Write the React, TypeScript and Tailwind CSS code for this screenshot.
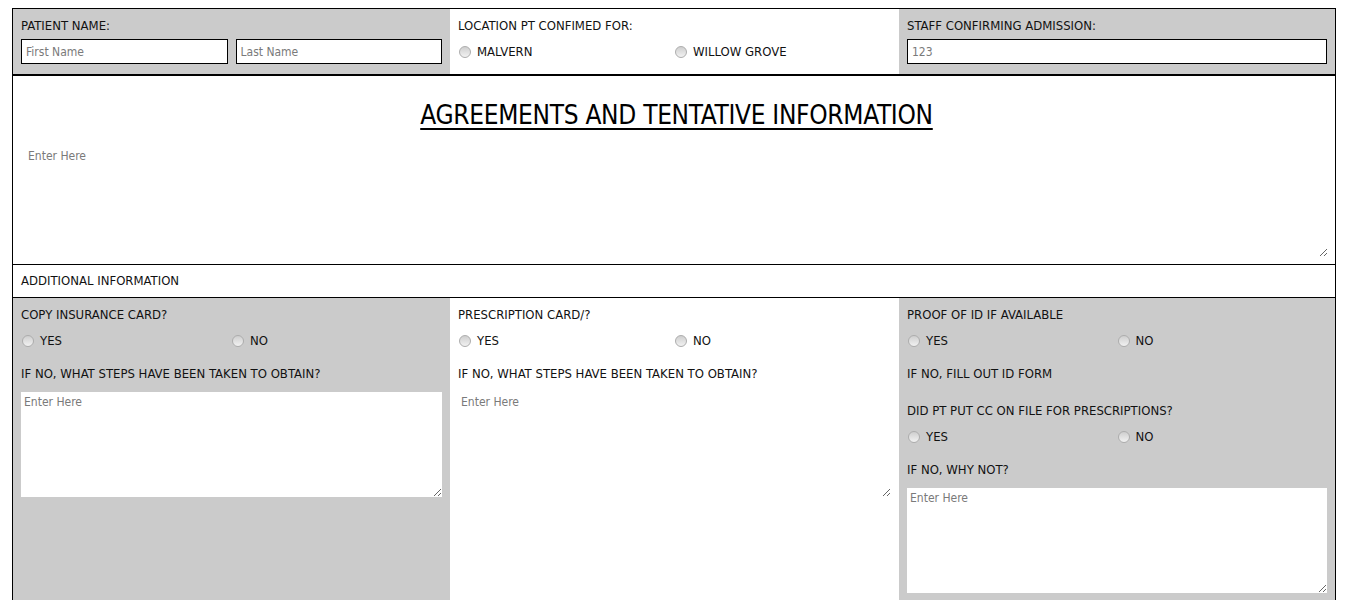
import React from 'react'

const font = { fontFamily: '"DejaVu Sans Condensed", "Liberation Sans", sans-serif' }

function Label({ children, className = '' }: { children: React.ReactNode; className?: string }) {
  return <div className={`text-[13px] leading-[18px] text-[#111] ${className}`}>{children}</div>
}

function Radio({ label, name }: { label: string; name: string }) {
  return (
    <label className="flex items-center gap-[6px] text-[13px] leading-[18px] text-[#111]">
      <input
        type="radio"
        name={name}
        className="appearance-none w-[12px] h-[12px] rounded-full border border-[#adadad] bg-linear-to-b from-[#cfcfcf] to-[#f2f2f2] m-0 shrink-0"
      />
      {label}
    </label>
  )
}

function YesNo({ name, className = '' }: { name: string; className?: string }) {
  return (
    <div className={`grid grid-cols-2 pl-px ${className}`}>
      <Radio label="YES" name={name} />
      <Radio label="NO" name={name} />
    </div>
  )
}

function Area({ className = '' }: { className?: string }) {
  return (
    <textarea
      placeholder="Enter Here"
      className={`block w-full bg-white border-0 outline-none px-[3px] py-[3px] text-[12px] leading-[15px] text-[#333] placeholder:text-[#7a7a7a] ${className}`}
    />
  )
}

export default function App() {
  return (
    <div className="min-h-screen bg-white pt-2 px-3" style={font}>
      <div className="border border-black">
        {/* top row */}
        <div className="grid grid-cols-[437px_449px_436px] border-b-2 border-black">
          <div className="bg-[#cbcbcb] px-2 pt-2 pb-[10px]">
            <Label>PATIENT NAME:</Label>
            <div className="flex gap-2 mt-[4px]">
              <input
                placeholder="First Name"
                className="w-full h-[25px] bg-white border border-black px-[4px] text-[12px] placeholder:text-[#7a7a7a] outline-none"
              />
              <input
                placeholder="Last Name"
                className="w-full h-[25px] bg-white border border-black px-[4px] text-[12px] placeholder:text-[#7a7a7a] outline-none"
              />
            </div>
          </div>
          <div className="bg-white px-2 pt-2">
            <Label>LOCATION PT CONFIMED FOR:</Label>
            <div className="grid grid-cols-2 pl-px mt-[8px]">
              <Radio label="MALVERN" name="loc" />
              <Radio label="WILLOW GROVE" name="loc" />
            </div>
          </div>
          <div className="bg-[#cbcbcb] px-2 pt-2 pb-[10px]">
            <Label>STAFF CONFIRMING ADMISSION:</Label>
            <input
              placeholder="123"
              className="mt-[4px] w-full h-[25px] bg-white border border-black px-[4px] text-[12px] placeholder:text-[#7a7a7a] outline-none"
            />
          </div>
        </div>

        {/* agreements */}
        <div className="pt-[23px] pb-[7px] pl-3 pr-[7px]">
          <h1 className="text-center text-[26px] leading-[32px] tracking-[-0.3px] text-black underline decoration-2 underline-offset-[4px]">
            AGREEMENTS AND TENTATIVE INFORMATION
          </h1>
          <Area className="mt-[15px] h-[111px]" />
        </div>

        <div className="border-y border-black h-[34px] px-2 flex items-center">
          <Label className="-mt-[1px]">ADDITIONAL INFORMATION</Label>
        </div>

        {/* bottom row */}
        <div className="grid grid-cols-[437px_449px_436px]">
          <div className="bg-[#cbcbcb] px-2 pt-2 pb-6">
            <Label>COPY INSURANCE CARD?</Label>
            <YesNo name="ins" className="mt-[8px]" />
            <Label className="mt-[15px]">IF NO, WHAT STEPS HAVE BEEN TAKEN TO OBTAIN?</Label>
            <Area className="mt-[9px] h-[105px]" />
          </div>
          <div className="bg-white px-2 pt-2 pb-6">
            <Label>PRESCRIPTION CARD/?</Label>
            <YesNo name="rx" className="mt-[8px]" />
            <Label className="mt-[15px]">IF NO, WHAT STEPS HAVE BEEN TAKEN TO OBTAIN?</Label>
            <Area className="mt-[9px] h-[105px]" />
          </div>
          <div className="bg-[#cbcbcb] px-2 pt-2 pb-[24px]">
            <Label>PROOF OF ID IF AVAILABLE</Label>
            <YesNo name="id" className="mt-[8px]" />
            <Label className="mt-[15px]">IF NO, FILL OUT ID FORM</Label>
            <Label className="mt-[19px]">DID PT PUT CC ON FILE FOR PRESCRIPTIONS?</Label>
            <YesNo name="cc" className="mt-[8px]" />
            <Label className="mt-[15px]">IF NO, WHY NOT?</Label>
            <Area className="mt-[9px] h-[105px]" />
          </div>
        </div>
      </div>
    </div>
  )
}
